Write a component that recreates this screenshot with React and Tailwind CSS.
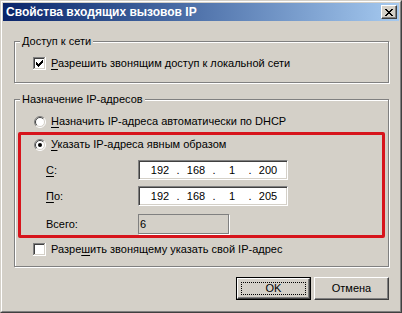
import React from "react";

const raised =
  "border border-t-white border-l-white border-r-[#404040] border-b-[#404040] shadow-[inset_-1px_-1px_0_#808080]";
const sunken =
  "border border-t-[#808080] border-l-[#808080] border-r-white border-b-white shadow-[inset_1px_1px_0_#404040,inset_-1px_-1px_0_#d4d0c8]";

function CheckBox({ checked }) {
  const check = [
    "......X",
    ".....XX",
    "X...XXX",
    "XX.XXX.",
    "XXXXX..",
    ".XXX...",
    "..X....",
  ];
  return (
    <svg width="13" height="13" viewBox="0 0 13 13" shapeRendering="crispEdges" className="shrink-0">
      <rect x="0" y="0" width="13" height="13" fill="#fff" />
      <rect x="0" y="0" width="12" height="1" fill="#808080" />
      <rect x="0" y="0" width="1" height="12" fill="#808080" />
      <rect x="1" y="1" width="10" height="1" fill="#404040" />
      <rect x="1" y="1" width="1" height="10" fill="#404040" />
      <rect x="1" y="11" width="11" height="1" fill="#d4d0c8" />
      <rect x="11" y="1" width="1" height="11" fill="#d4d0c8" />
      {checked &&
        check.map((row, y) =>
          row.split("").map((c, x) =>
            c === "X" ? (
              <rect key={`${x}-${y}`} x={x + 3} y={y + 3} width="1" height="1" fill="#000" />
            ) : null
          )
        )}
    </svg>
  );
}

function Radio({ checked }) {
  return (
    <svg width="12" height="12" viewBox="0 0 12 12" className="shrink-0">
      <circle cx="6" cy="6" r="5" fill="#fff" />
      <path d="M2.1 9.9 A5.5 5.5 0 0 1 9.9 2.1" stroke="#808080" fill="none" />
      <path d="M9.9 2.1 A5.5 5.5 0 0 1 2.1 9.9" stroke="#fff" fill="none" />
      <path d="M2.8 9.2 A4.5 4.5 0 0 1 9.2 2.8" stroke="#404040" fill="none" />
      <path d="M9.2 2.8 A4.5 4.5 0 0 1 2.8 9.2" stroke="#d4d0c8" fill="none" />
      {checked && <circle cx="6" cy="6" r="2" fill="#000" />}
    </svg>
  );
}

function IpBox({ parts }) {
  return (
    <div className={`w-[150px] h-[20px] bg-white flex items-center pl-[6px] ${sunken}`}>
      {parts.map((p, i) => (
        <React.Fragment key={i}>
          <span className="w-[30px] text-center">{p}</span>
          {i < 3 && <span className="w-[6px] text-center">.</span>}
        </React.Fragment>
      ))}
    </div>
  );
}

export default function App() {
  return (
    <div className="w-[402px] h-[313px] border border-t-[#d4d0c8] border-l-[#d4d0c8] border-r-[#404040] border-b-[#404040] font-['Liberation_Sans',Arial,sans-serif] text-[11px] leading-[13px] text-black">
      <div className="h-full border border-t-white border-l-white border-r-[#808080] border-b-[#808080] bg-[#d4d0c8] p-px flex flex-col">
        <div className="h-[18px] flex items-center justify-between pl-[3px] pr-[2px] bg-gradient-to-r from-[#0a246a] to-[#a6caf0]">
          <span className="text-white font-bold text-[12px]">Свойства входящих вызовов IP</span>
          <div className={`w-[16px] h-[14px] bg-[#d4d0c8] flex items-center justify-center ${raised}`}>
            <svg width="8" height="7" viewBox="0 0 8 7" shapeRendering="crispEdges">
              <path d="M0 0h2v1h-2zM6 0h2v1h-2zM1 1h2v1h-2zM5 1h2v1h-2zM2 2h4v1h-4zM3 3h2v1h-2zM2 4h4v1h-4zM1 5h2v1h-2zM5 5h2v1h-2zM0 6h2v1h-2zM6 6h2v1h-2z" fill="#000" />
            </svg>
          </div>
        </div>

        <fieldset className="ml-[11px] mt-[14px] w-[375px] border border-[#808080] shadow-[inset_1px_1px_0_#fff,1px_1px_0_#fff]">
          <legend className="ml-[5px] px-[2px] bg-[#d4d0c8]">Доступ к сети</legend>
          <div className="flex items-center gap-[5px] pl-[18px] pt-[9px] pb-[12px]">
            <CheckBox checked />
            <span>
              <u className="underline-offset-2">Р</u>азрешить звонящим доступ к локальной сети
            </span>
          </div>
        </fieldset>

        <fieldset className="ml-[11px] mt-[10px] w-[375px] border border-[#808080] shadow-[inset_1px_1px_0_#fff,1px_1px_0_#fff]">
          <legend className="ml-[5px] px-[2px] bg-[#d4d0c8]">Назначение IP-адресов</legend>
          <div className="flex items-center gap-[5px] pl-[19px] mt-[9px]">
            <Radio />
            <span>
              <u className="underline-offset-2">Н</u>азначить IP-адреса автоматически по DHCP
            </span>
          </div>

          <div className="ml-[3px] mt-[4px] w-[367px] border-[3px] border-[#d7141c] rounded-[2px] pt-[3px] pb-[1px]">
            <div className="flex items-center gap-[5px] pl-[13px]">
              <Radio checked />
              <span>
                <u className="underline-offset-2">У</u>казать IP-адреса явным образом
              </span>
            </div>
            <div className="flex items-center pl-[25px] mt-[9px]">
              <span className="w-[92px]">
                <u className="underline-offset-2">С</u>:
              </span>
              <IpBox parts={["192", "168", "1", "200"]} />
            </div>
            <div className="flex items-center pl-[25px] mt-[6px]">
              <span className="w-[92px]">
                <u className="underline-offset-2">П</u>о:
              </span>
              <IpBox parts={["192", "168", "1", "205"]} />
            </div>
            <div className="flex items-center pl-[25px] mt-[8px]">
              <span className="w-[92px]">Всего:</span>
              <div className="w-[91px] h-[20px] flex items-center pl-px border border-t-[#808080] border-l-[#808080] border-r-[#808080] border-b-[#808080] shadow-[1px_1px_0_#fff]">
                6
              </div>
            </div>
          </div>

          <div className="flex items-center gap-[5px] pl-[18px] mt-[5px] pb-[10px]">
            <CheckBox />
            <span>
              Разре<u className="underline-offset-2">ш</u>ить звонящему указать свой IP-адрес
            </span>
          </div>
        </fieldset>

        <div className="flex justify-end gap-[3px] mt-[10px] mr-[10px]">
          <div className="w-[75px] h-[23px] border border-black">
            <div className={`h-full bg-[#d4d0c8] flex items-center justify-center p-[3px] ${raised}`}>
              <div className="w-full h-full border border-dotted border-black flex items-center justify-center">
                OK
              </div>
            </div>
          </div>
          <div className={`w-[75px] h-[23px] bg-[#d4d0c8] flex items-center justify-center ${raised}`}>
            Отмена
          </div>
        </div>
      </div>
    </div>
  );
}
